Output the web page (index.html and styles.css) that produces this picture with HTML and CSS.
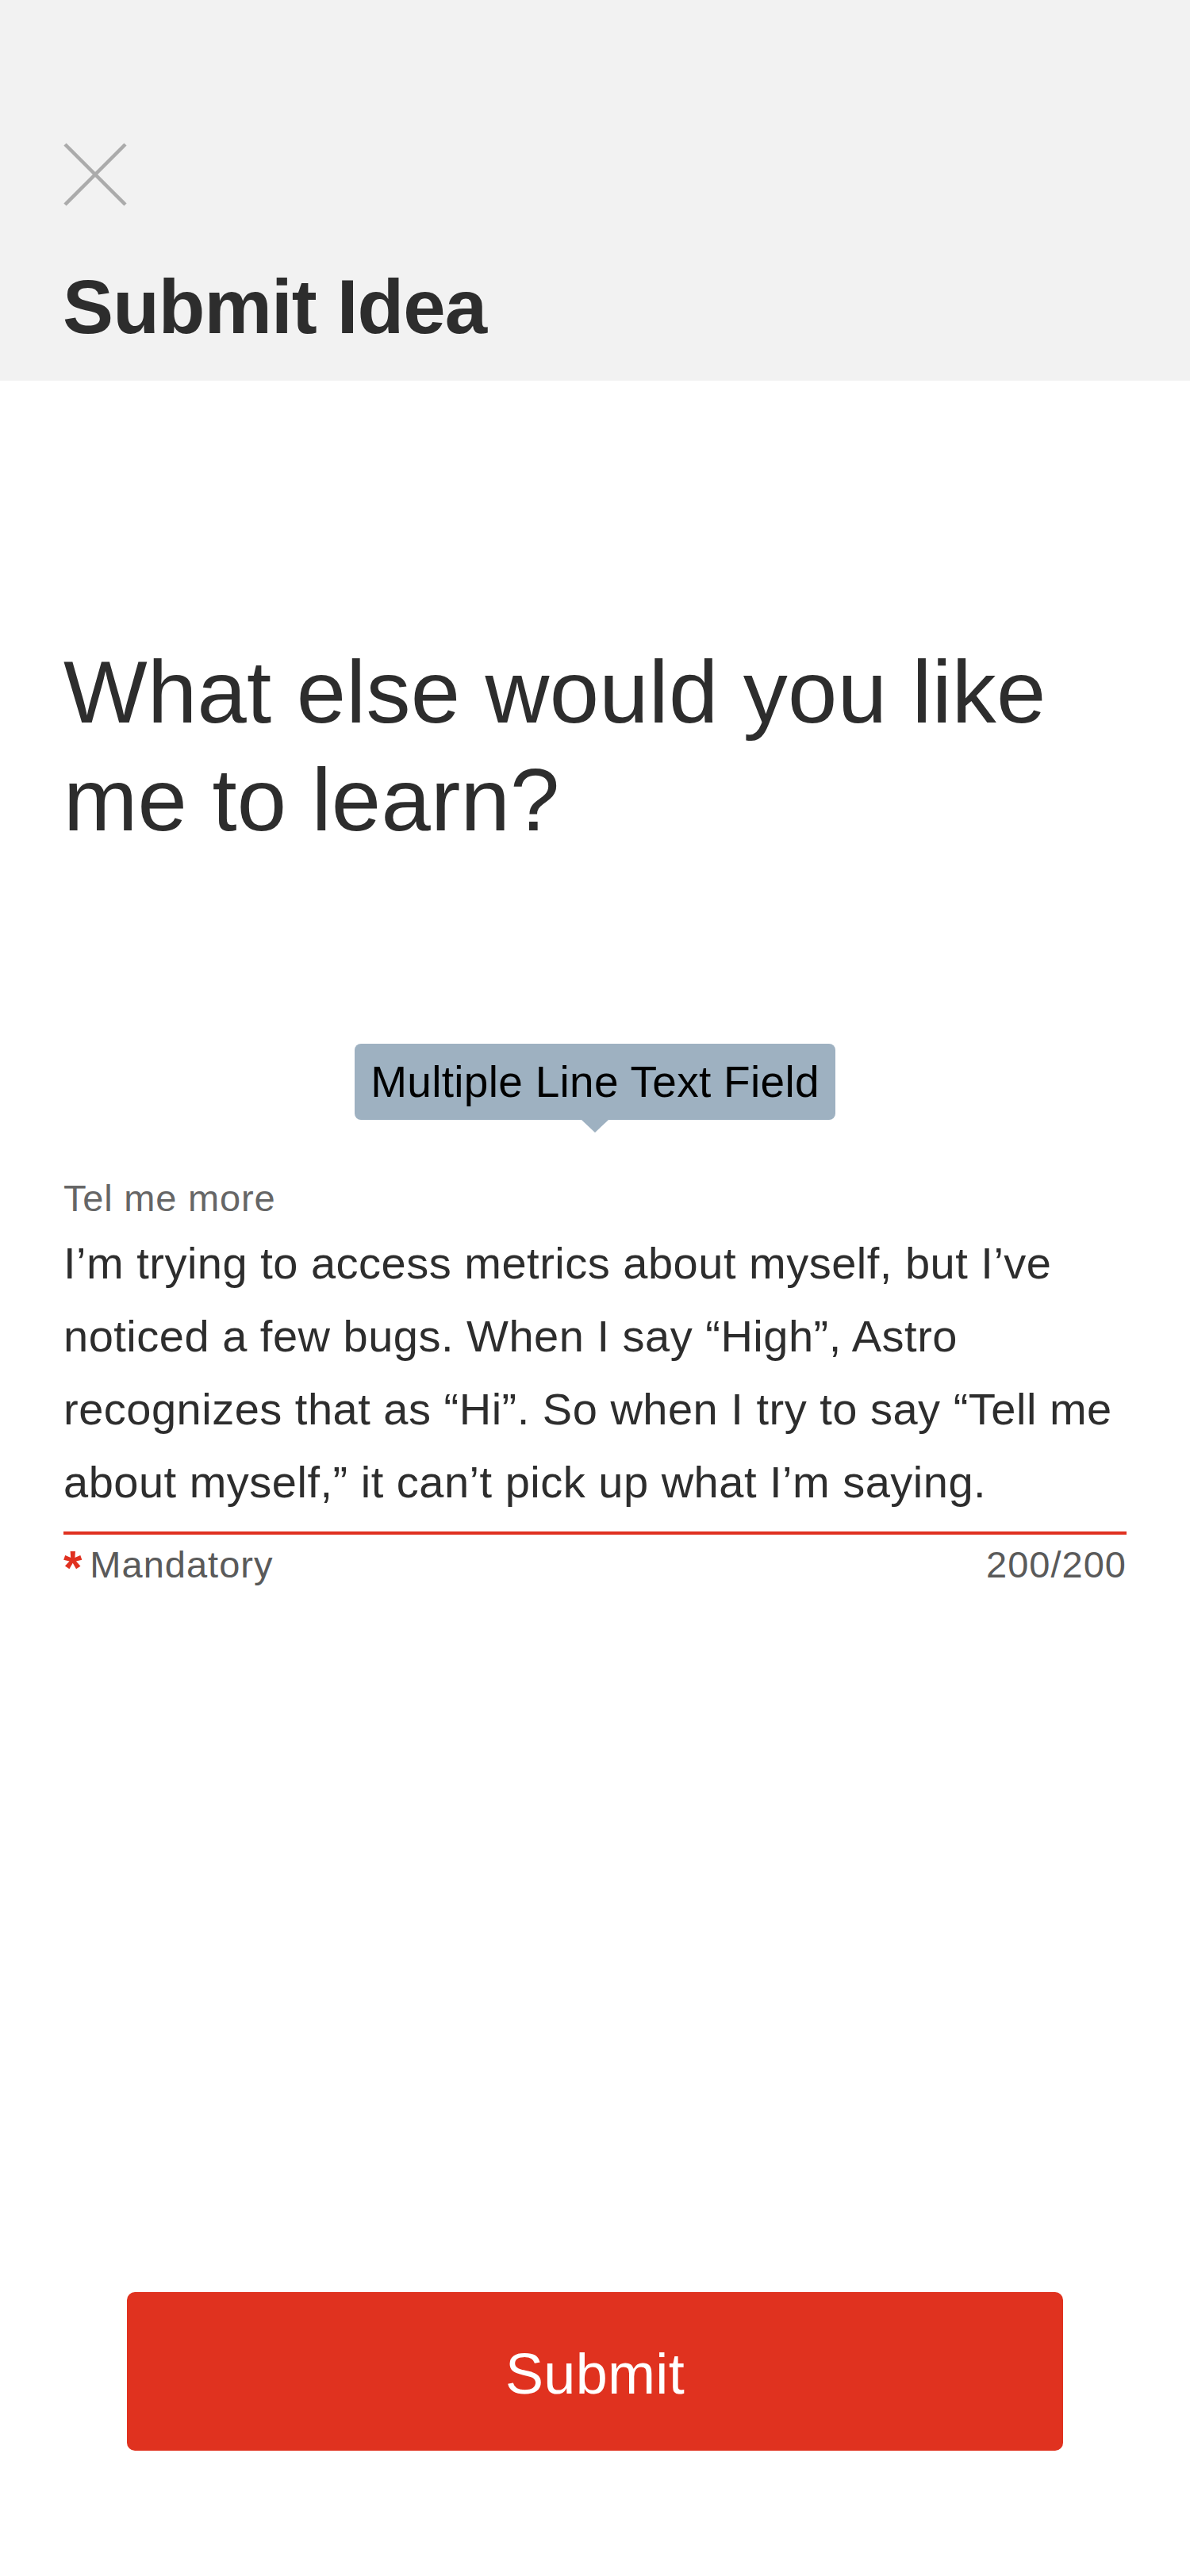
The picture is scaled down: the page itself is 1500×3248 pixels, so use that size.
FILE: index.html
```html
<!DOCTYPE html>
<html lang="en">
<head>
<meta charset="utf-8">
<title>Submit Idea</title>
<link rel="stylesheet" href="styles.css">
</head>
<body>
<div class="page">
  <header class="header">
    <button class="close" aria-label="Close">
      <svg width="80" height="80" viewBox="0 0 80 80">
        <line x1="2" y1="2" x2="78" y2="78" stroke="#ababab" stroke-width="4.5"/>
        <line x1="78" y1="2" x2="2" y2="78" stroke="#ababab" stroke-width="4.5"/>
      </svg>
    </button>
    <h1 class="title">Submit Idea</h1>
  </header>
  <main class="content">
    <h2 class="question">What else would you like<br>me to learn?</h2>
    <div class="tip-row">
      <div class="tip">Multiple Line Text Field</div>
    </div>
    <div class="field">
      <div class="field-label">Tel me more</div>
      <div class="field-value">I’m trying to access metrics about myself, but I’ve<br>noticed a few bugs. When I say “High”, Astro<br>recognizes that as “Hi”. So when I try to say “Tell me<br>about myself,” it can’t pick up what I’m saying.</div>
      <div class="field-meta">
        <span class="mandatory"><span class="star">*</span>Mandatory</span>
        <span class="count">200/200</span>
      </div>
    </div>
  </main>
  <div class="actions">
    <button class="submit">Submit</button>
  </div>
</div>
</body>
</html>
```
FILE: styles.css
```css
html, body {
  margin: 0;
  padding: 0;
  background: #ffffff;
}
body {
  font-family: "Liberation Sans", Arial, Helvetica, sans-serif;
  color: #2d2d2d;
}
.page {
  min-height: 3248px;
  display: flex;
  flex-direction: column;
}
.header {
  background: #f2f2f2;
  height: 480px;
  box-sizing: border-box;
  padding: 180px 80px 0 80px;
}
.close {
  display: block;
  width: 80px;
  height: 80px;
  padding: 0;
  margin: 0;
  border: 0;
  background: transparent;
}
.close svg {
  display: block;
}
.title {
  margin: 72px 0 0 -1px;
  font-size: 96px;
  line-height: 110px;
  font-weight: 700;
  letter-spacing: -0.9px;
  color: #2d2d2d;
}
.content {
  padding: 0 80px;
}
.question {
  margin: 325px 0 0 0;
  font-size: 112px;
  line-height: 136px;
  font-weight: 400;
  letter-spacing: 0.25px;
  color: #2d2d2d;
}
.tip-row {
  display: flex;
  justify-content: center;
  margin-top: 239px;
}
.tip {
  position: relative;
  background: #9eb1c1;
  color: #000;
  font-size: 55px;
  line-height: 96px;
  height: 96px;
  padding: 0 20px;
  letter-spacing: 0.3px;
  border-radius: 8px;
  white-space: nowrap;
}
.tip::after {
  content: "";
  position: absolute;
  left: 50%;
  top: 96px;
  margin-left: -17px;
  border-left: 17px solid transparent;
  border-right: 17px solid transparent;
  border-top: 16px solid #9eb1c1;
}
.field {
  margin-top: 71px;
}
.field-label {
  font-size: 47px;
  line-height: 56px;
  letter-spacing: 0.8px;
  color: #666666;
}
.field-value {
  margin-top: 8px;
  font-size: 56px;
  line-height: 92px;
  letter-spacing: 0.5px;
  color: #2d2d2d;
  white-space: nowrap;
  padding-bottom: 16px;
  border-bottom: 4px solid #e03120;
}
.field-meta {
  margin-top: 10px;
  display: flex;
  justify-content: space-between;
  font-size: 47px;
  line-height: 56px;
  letter-spacing: 1px;
  color: #5a5a5a;
}
.star {
  color: #e03120;
  font-size: 60px;
  font-weight: 700;
  line-height: 0;
  vertical-align: -8px;
  margin-right: 10px;
  letter-spacing: 0;
}
.actions {
  margin-top: auto;
  padding: 0 160px 158px 160px;
}
.submit {
  display: block;
  width: 100%;
  height: 200px;
  box-sizing: border-box;
  padding: 6px 0 0 0;
  border: 0;
  border-radius: 10px;
  background: #e0321f;
  color: #ffffff;
  font-family: "Liberation Sans", Arial, Helvetica, sans-serif;
  font-size: 72px;
  line-height: 194px;
  letter-spacing: 0.3px;
}
```
